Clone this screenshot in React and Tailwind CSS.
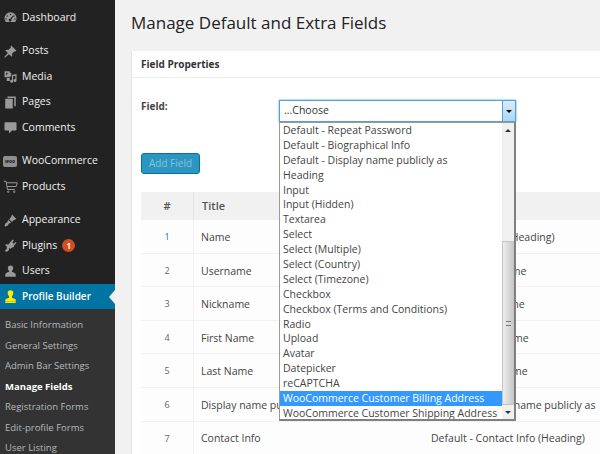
import React from 'react';

const font = "font-['Open_Sans','Noto_Sans',sans-serif]";

const Icon = ({ d, className = 'text-[#9a9a9a]' }) => (
  <svg viewBox="0 0 20 20" className={`w-[15px] h-[15px] shrink-0 ${className}`} fill="currentColor">
    <path fillRule="evenodd" d={d} />
  </svg>
);

const icons = {
  dashboard: 'M10 3a8 8 0 0 0-8 8c0 2 .7 3.700 2 5h12c1.300-1.300 2-3 2-5a8 8 0 0 0-8-8zm0 2a1 1 0 1 1 0 2 1 1 0 0 1 0-2zM5.500 7a1 1 0 1 1 0 2 1 1 0 0 1 0-2zm9 0a1 1 0 1 1 0 2 1 1 0 0 1 0-2zM4 11a1 1 0 1 1 0 2 1 1 0 0 1 0-2zm12 0a1 1 0 1 1 0 2 1 1 0 0 1 0-2zm-3-3.500 1 .7-3 4.300a1.800 1.800 0 1 1-1.200-.8z',
  posts: 'M11 2l7 7-1.500 1-1-.5L12 13c.5 1.500.3 3-.5 4L8 13.500 3 18l-1 0 0-1 4.500-5L3 8.500c1-.8 2.500-1 4-.5l3.500-3.500-.5-1z',
  media: 'M2 3h7v2h2v5H9v1H2zm3 2a1.200 1.200 0 1 0 0 2.400A1.200 1.200 0 0 0 5 5zM12 8l6-1.500v8.700a2 2 0 1 1-1.500-1.900V9l-3 .7v6.500a2 2 0 1 1-1.500-1.900zM5 12h4v4H5z',
  pages: 'M6 2h11v13h-2V4H6zM3 5h10v13H3z',
  comments: 'M3 3h14a1 1 0 0 1 1 1v9a1 1 0 0 1-1 1h-5l-4 4v-4H3a1 1 0 0 1-1-1V4a1 1 0 0 1 1-1z',
  appearance: 'M12 2l6 6-4 1.500L12 12l-4-4 2.500-2zM7 9l4 4c-1 .8-2 1-3 1l-2 3-3 1-1-1 1-3 3-2c0-1 .2-2 1-3z',
  plugins: 'M13 2l1.500 1-2 3 2 1.500 2.500-2.200 1 1.300-3 3c0 2-1.500 3.400-3.500 3.400l-2 1.500L8 13v3l-2 2H3v-2l2-1.500V11L3 9.500l1-1.500 3 1 2.500-3.500z',
  users: 'M10 2a3.500 3.500 0 0 1 3.500 3.500c0 1.500-.8 3-1.500 3.700v1.300c2.500.5 5 1.500 5 3.500v3H3v-3c0-2 2.500-3 5-3.500V9.200c-.7-.7-1.500-2.200-1.500-3.700A3.500 3.500 0 0 1 10 2z',
  builder: 'M10 1.500a3.800 3.800 0 0 1 3.800 3.800c0 1.700-.9 3.400-1.800 4.200V12c2.500.3 5 1 5 3v1.500H3V15c0-2 2.500-2.700 5-3V9.500C7.100 8.700 6.200 7 6.200 5.300A3.800 3.800 0 0 1 10 1.500zM3 17h14v1.500H3z',
};

const MenuItem = ({ label, icon, children }) => (
  <div className="h-[25.500px] flex items-center pl-[2px]">
    <div className="w-[20px] pl-[1px] flex shrink-0">{icon}</div>
    <span className="text-[10.500px] text-[#eeeeee] whitespace-nowrap">{label}</span>
    {children}
  </div>
);

const Sidebar = () => (
  <aside className="w-[115px] shrink-0 bg-[#222222] h-[454px] overflow-hidden pt-[5px]">
    <MenuItem label="Dashboard" icon={<Icon d={icons.dashboard} />} />
    <div className="h-[8px]" />
    <MenuItem label="Posts" icon={<Icon d={icons.posts} />} />
    <MenuItem label="Media" icon={<Icon d={icons.media} />} />
    <MenuItem label="Pages" icon={<Icon d={icons.pages} />} />
    <MenuItem label="Comments" icon={<Icon d={icons.comments} />} />
    <div className="h-[8px]" />
    <MenuItem
      label="WooCommerce"
      icon={
        <span className="w-[14px] h-[11px] bg-[#8f8f8f] rounded-[2px] flex items-center justify-center text-[5px] font-bold italic text-[#222222] leading-none">
          woo
        </span>
      }
    />
    <MenuItem
      label="Products"
      icon={
        <svg viewBox="0 0 20 20" className="w-[15px] h-[15px] text-[#9a9a9a]" fill="none" stroke="currentColor" strokeWidth="1.300">
          <path d="M1 3h3l2 11h10M4.500 5H19l-1.500 5H5.500" />
          <circle cx="7" cy="17" r="1" />
          <circle cx="15" cy="17" r="1" />
        </svg>
      }
    />
    <div className="h-[8px]" />
    <MenuItem label="Appearance" icon={<Icon d={icons.appearance} />} />
    <MenuItem label="Plugins" icon={<Icon d={icons.plugins} />}>
      <span className="ml-[5px] w-[13px] h-[13px] rounded-full bg-[#d54e21] text-white text-[8px] font-bold flex items-center justify-center">1</span>
    </MenuItem>
    <MenuItem label="Users" icon={<Icon d={icons.users} />} />
    <div className="relative h-[25px] bg-[#0074a2] flex items-center pl-[2px]">
      <div className="w-[20px] pl-[1px] flex shrink-0">
        <Icon d={icons.builder} className="text-[#ffea00]" />
      </div>
      <span className="text-[10px] font-semibold text-white whitespace-nowrap">Profile Builder</span>
      <div className="absolute right-0 top-[6px] w-0 h-0 border-y-[7px] border-y-transparent border-r-[6px] border-r-[#f1f1f1]" />
    </div>
    <div className="bg-[#333333] pt-[6px] pl-[5px] h-[200px]">
      {['Basic Information', 'General Settings', 'Admin Bar Settings', 'Manage Fields', 'Registration Forms', 'Edit-profile Forms', 'User Listing'].map((s) => (
        <div
          key={s}
          className={`h-[20.500px] flex items-center text-[9.500px] whitespace-nowrap ${s === 'Manage Fields' ? 'text-white font-bold' : 'text-[#b4b9be]'}`}
        >
          {s}
        </div>
      ))}
    </div>
  </aside>
);

const rows = [
  ['1', 'Name', 'Default - Name (Heading)'],
  ['2', 'Username', 'Default - Username'],
  ['3', 'Nickname', 'Default - Nickname'],
  ['4', 'First Name', 'Default - First Name'],
  ['5', 'Last Name', 'Default - Last Name'],
  ['6', 'Display name publicly as', 'Default - Display name publicly as'],
  ['7', 'Contact Info', 'Default - Contact Info (Heading)'],
];

const options = [
  'Default - Repeat Password',
  'Default - Biographical Info',
  'Default - Display name publicly as',
  'Heading',
  'Input',
  'Input (Hidden)',
  'Textarea',
  'Select',
  'Select (Multiple)',
  'Select (Country)',
  'Select (Timezone)',
  'Checkbox',
  'Checkbox (Terms and Conditions)',
  'Radio',
  'Upload',
  'Avatar',
  'Datepicker',
  'reCAPTCHA',
  'WooCommerce Customer Billing Address',
  'WooCommerce Customer Shipping Address',
];

const Dropdown = () => (
  <div className="absolute left-[147px] top-[71px] w-[237px] h-[299px] bg-white border border-[#9a9a9a] border-r-2 border-r-[#808080] border-b-2 border-b-[#808080] flex z-10">
    <div className="flex-1 overflow-hidden">
      {options.map((o) => (
        <div
          key={o}
          className={`h-[14.900px] leading-[14.900px] pl-[3px] text-[10.500px] whitespace-nowrap ${
            o.includes('Billing') ? 'bg-[#3399ff] text-white' : 'text-[#444444]'
          }`}
        >
          {o}
        </div>
      ))}
    </div>
    <div className="w-[12px] bg-[#f0f0f0] flex flex-col">
      <div className="h-[14px] flex items-center justify-center">
        <div className="w-0 h-0 border-x-[3px] border-x-transparent border-b-[3px] border-b-[#333333]" />
      </div>
      <div className="flex-1 flex flex-col justify-end">
        <div className="h-[164px] bg-gradient-to-r from-[#eeeeee] to-[#c9c9c9] border border-[#c4c4c4] flex items-center justify-center">
          <div className="w-[5px] h-[5px] border-y border-[#777777]" />
        </div>
      </div>
      <div className="h-[14px] flex items-center justify-center">
        <div className="w-0 h-0 border-x-[3px] border-x-transparent border-t-[3px] border-t-[#333333]" />
      </div>
    </div>
  </div>
);

export default function App() {
  return (
    <div className={`w-[600px] h-[454px] flex overflow-hidden bg-[#f1f1f1] ${font}`}>
      <Sidebar />
      <main className="flex-1 min-w-0 pl-[16px] overflow-hidden">
        <h1 className="text-[17px] leading-[24px] text-[#222222] pt-[11px] h-[51px] whitespace-nowrap">
          Manage Default and Extra Fields
        </h1>
        <section className="relative bg-white w-[469px] border-l border-[#e5e5e5] h-[403px]">
          <h3 className="h-[27px] flex items-center pl-[9px] pt-[1px] text-[10px] font-bold text-[#333333] border-b border-[#eeeeee]">
            Field Properties
          </h3>
          <div className="flex items-start pl-[9px] pt-[22px] h-[75px]">
            <label className="text-[10px] leading-[14px] -mt-[1px] font-bold text-[#444444] w-[138px] shrink-0">Field:</label>
            <div className="w-[237px] h-[22px] bg-white border border-[#5b9dd9] shadow-[0_0_2px_rgba(30,140,190,0.8)] flex items-center justify-between pl-[4px]">
              <span className="text-[10.500px] text-[#333333]">...Choose</span>
              <div className="w-[13px] h-[20px] bg-gradient-to-b from-[#d9ecf9] to-[#a9d6f3] border-l border-[#5b9dd9] flex items-center justify-center">
                <div className="w-0 h-0 border-x-[3px] border-x-transparent border-t-[3px] border-t-black" />
              </div>
            </div>
          </div>
          <Dropdown />
          <div className="pl-[9px] h-[39px]">
            <button className="w-[59px] h-[21px] rounded-[3px] bg-[#2e95c0] border border-[#0074a2] text-[10px] text-[#7fc4e0] flex items-center justify-center">
              Add Field
            </button>
          </div>
          <div className="ml-[9px]">
            <div className="h-[28px] bg-[#f1f1f1] flex items-center text-[11px] text-[#555555] font-semibold">
              <div className="w-[53px] h-full flex items-center justify-center border-r border-[#e5e5e5]">#</div>
              <div className="pl-[8px]">Title</div>
            </div>
            {rows.map(([n, title, type]) => (
              <div key={n} className="h-[33.600px] flex items-center border-b border-[#f1f1f1] bg-[#fdfdfd] text-[10.500px] text-[#444444] whitespace-nowrap overflow-hidden">
                <div className={`w-[53px] h-full flex items-center justify-center pt-[1px] text-[9px] border-r border-[#f1f1f1] shrink-0 ${n === '1' ? 'text-[#0074a2]' : 'text-[#666666]'}`}>{n}</div>
                <div className="pl-[7px] pt-[3px] w-[237px] shrink-0">{title}</div>
                <div className="pt-[3px]">{type}</div>
              </div>
            ))}
          </div>
        </section>
      </main>
    </div>
  );
}
